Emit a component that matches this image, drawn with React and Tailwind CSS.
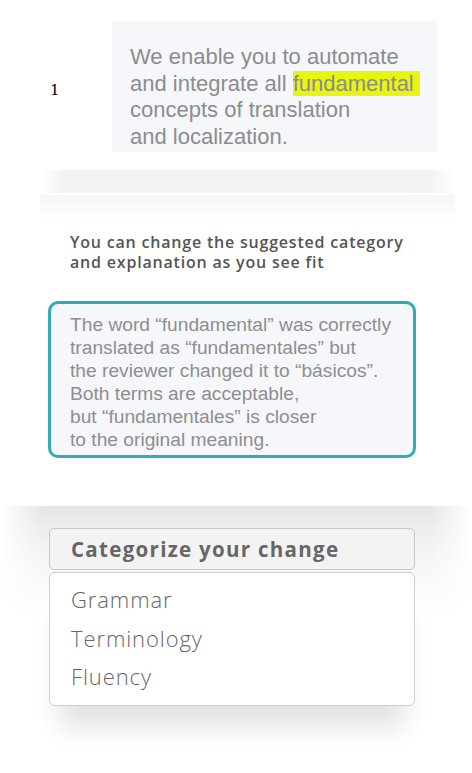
export default function App() {
  const sans = { fontFamily: '"Liberation Sans", Arial, sans-serif' };
  const mont = { fontFamily: '"Open Sans", "Noto Sans", sans-serif' };

  return (
    <div className="w-[472px] min-h-[773px] bg-white overflow-hidden">
      {/* example sentence */}
      <div className="flex items-center pt-[21px]">
        <div className="w-[112px] pl-[50px] pt-[8px] text-[15px] text-black" style={{ fontFamily: '"DejaVu Serif", serif' }}>
          1
        </div>
        <div
          className="w-[326px] h-[131px] bg-[#f6f7fa] pl-[18px] pt-[23px] text-[22px] leading-[26.5px] text-[#8c8c90]"
          style={sans}
        >
          We enable you to automate
          <br />
          and integrate all <span className="bg-[#e8f511] pr-[6px]">fundamental</span>
          <br />
          concepts of translation
          <br />
          and localization.
        </div>
      </div>

      {/* faded card edge */}
      <div className="mx-[40px] mt-[18px] w-[415px]">
        <div className="h-[23px] bg-[linear-gradient(to_right,#fff,#f2f2f2_6%,#f3f3f3_94%,#fff)]" />
        <div className="h-[2px] bg-white" />
        <div className="h-[24px] bg-[linear-gradient(to_bottom,#f6f6f6,#fff)]" />
      </div>

      <div
        className="pl-[70px] pt-[13px] text-[16px] leading-[20px] font-semibold tracking-[0.8px] text-[#555]"
        style={mont}
      >
        You can change the suggested category
        <br />
        and explanation as you see fit
      </div>

      {/* explanation box */}
      <div
        className="ml-[48px] mt-[29px] w-[368px] h-[157px] border-[3px] border-[#2fabb9] rounded-[10px] bg-[#f6f7fa] pl-[19px] pt-[9px] text-[19.2px] leading-[23px] text-[#8e8e92]"
        style={sans}
      >
        The word “fundamental” was correctly
        <br />
        translated as “fundamentales” but
        <br />
        the reviewer changed it to “básicos”.
        <br />
        Both terms are acceptable,
        <br />
        but “fundamentales” is closer
        <br />
        to the original meaning.
      </div>

      {/* category dropdown */}
      <div className="mt-[48px] pt-[22px] pb-[60px] bg-[linear-gradient(to_right,#fff,transparent_9%,transparent_91%,#fff),linear-gradient(to_bottom,#e5e5e5,#f3f3f3_40px,#fff_110px)]">
        <div className="ml-[49px] w-[366px] flex flex-col gap-[2px]">
          <div
            className="h-[42px] rounded-[5px] border-[1.5px] border-[#c9c9c9] bg-[#f3f3f3] pl-[21px] flex items-center text-[20.5px] font-bold tracking-[1.3px] text-[#666]"
            style={mont}
          >
            Categorize your change
          </div>
          <div
            className="h-[134px] rounded-[6px] border-[1.5px] border-[#cfcfcf] bg-white pl-[21px] pt-[7px] flex flex-col text-[22px] leading-[38.5px] font-light tracking-[0.9px] text-[#666] shadow-[0_32px_24px_-10px_rgba(0,0,0,0.11)]"
            style={mont}
          >
            <span>Grammar</span>
            <span>Terminology</span>
            <span>Fluency</span>
          </div>
        </div>
      </div>
    </div>
  );
}
